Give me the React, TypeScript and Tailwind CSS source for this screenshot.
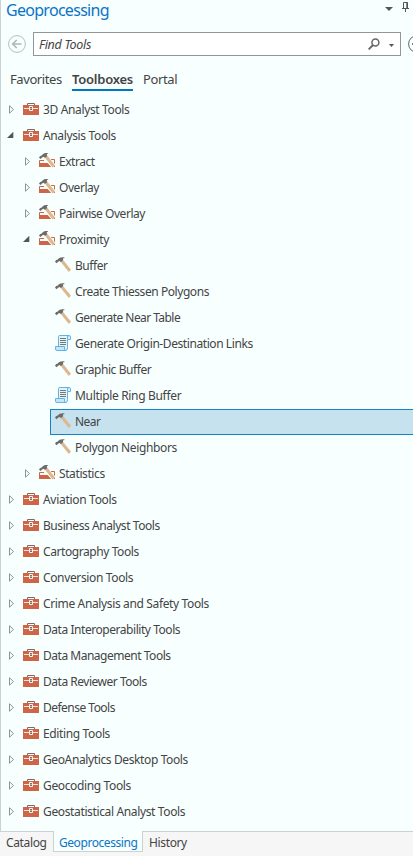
type Kind = 'box' | 'set' | 'tool' | 'script';
type Item = { label: string; kind: Kind; level: 0 | 1 | 2; open?: boolean; selected?: boolean; tracking?: string };

const items: Item[] = [
  { label: '3D Analyst Tools', kind: 'box', level: 0 },
  { label: 'Analysis Tools', kind: 'box', level: 0, open: true },
  { label: 'Extract', kind: 'set', level: 1, tracking: 'tracking-[-0.45px]' },
  { label: 'Overlay', kind: 'set', level: 1, tracking: 'tracking-[-0.45px]' },
  { label: 'Pairwise Overlay', kind: 'set', level: 1, tracking: 'tracking-[-0.46px]' },
  { label: 'Proximity', kind: 'set', level: 1, open: true },
  { label: 'Buffer', kind: 'tool', level: 2, tracking: 'tracking-[-0.45px]' },
  { label: 'Create Thiessen Polygons', kind: 'tool', level: 2, tracking: 'tracking-[-0.43px]' },
  { label: 'Generate Near Table', kind: 'tool', level: 2, tracking: 'tracking-[-0.56px]' },
  { label: 'Generate Origin-Destination Links', kind: 'script', level: 2, tracking: 'tracking-[-0.42px]' },
  { label: 'Graphic Buffer', kind: 'tool', level: 2, tracking: 'tracking-[-0.41px]' },
  { label: 'Multiple Ring Buffer', kind: 'script', level: 2, tracking: 'tracking-[-0.33px]' },
  { label: 'Near', kind: 'tool', level: 2, selected: true, tracking: 'tracking-[-0.55px]' },
  { label: 'Polygon Neighbors', kind: 'tool', level: 2 },
  { label: 'Statistics', kind: 'set', level: 1, tracking: 'tracking-[-0.4px]' },
  { label: 'Aviation Tools', kind: 'box', level: 0, tracking: 'tracking-[-0.3px]' },
  { label: 'Business Analyst Tools', kind: 'box', level: 0, tracking: 'tracking-[-0.43px]' },
  { label: 'Cartography Tools', kind: 'box', level: 0, tracking: 'tracking-[-0.42px]' },
  { label: 'Conversion Tools', kind: 'box', level: 0 },
  { label: 'Crime Analysis and Safety Tools', kind: 'box', level: 0 },
  { label: 'Data Interoperability Tools', kind: 'box', level: 0, tracking: 'tracking-[-0.45px]' },
  { label: 'Data Management Tools', kind: 'box', level: 0, tracking: 'tracking-[-0.48px]' },
  { label: 'Data Reviewer Tools', kind: 'box', level: 0, tracking: 'tracking-[-0.48px]' },
  { label: 'Defense Tools', kind: 'box', level: 0, tracking: 'tracking-[-0.52px]' },
  { label: 'Editing Tools', kind: 'box', level: 0 },
  { label: 'GeoAnalytics Desktop Tools', kind: 'box', level: 0, tracking: 'tracking-[-0.38px]' },
  { label: 'Geocoding Tools', kind: 'box', level: 0 },
  { label: 'Geostatistical Analyst Tools', kind: 'box', level: 0 },
];

function ItemIcon({ kind }: { kind: Kind }) {
  return (
    <svg className="mb-[2px] size-4 shrink-0" viewBox="0 0 16 16">
      {kind === 'box' && (
        <>
          <path d="M4.5 4V2.5h7V4" fill="none" stroke="#84685f" />
          <path d="M0 4h16v10H0Z" fill="#cd6546" />
          <path d="M1 7.5h5M10 7.5h5" stroke="#f7e5dd" />
          <path d="M6.5 5.5h3v4h-3Z" fill="#8b665c" stroke="#f7f2ef" />
          <path d="M7.5 7h1v1h-1Z" fill="#f7f2ef" />
        </>
      )}
      {kind === 'set' && (
        <>
          <path d="M0 10h16v4H0Z" fill="#cd6546" />
          <path d="M.5 10V7.5H5M11 6.5h4.5V10" fill="none" stroke="#cd6546" />
          <path d="M4.5 5.2 8.2 2 16.5 11.5 13.5 15.5Z" fill="#f7ffff" />
          <path d="M6.1 4.7 8.4 2.8 16 12.6 13.7 14.5Z" fill="#dfb78c" />
          <path d="M0 4.8 1.1 3 2.4 2.8C4 .7 5.7-.4 9 0L9.2 .6C7.6.8 7.5 1.8 8.3 3L6 5 4.7 3.8 3 4.4 1.7 6Z" fill="#6c6c6c" />
        </>
      )}
      {kind === 'tool' && (
        <>
          <path d="M6 5.2 8.3 3.3 16 12.8 13.8 15Z" fill="#dfb78c" />
          <path d="M0 4.8 1.1 3 2.4 2.8C4 .7 6 0 9.5.4V1C8.1 1.1 7.5 1.8 8.3 3L6 5.2 4.7 4.1 3 4.7 1.7 6.2Z" fill="#6c6c6c" />
        </>
      )}
      {kind === 'script' && (
        <>
          <path d="M3.5 11.5v-10Q3.5.5 5 .5h9q1.5 0 1.5 1.5v2.5h-3v8.3q0 2.7-2 2.7" fill="#e3f3fb" stroke="#62b4e2" />
          <path d="M12.5 4.5V2q0-1.5 1.5-1.5M.5 11.5h9V14q.2 1.5 1.5 1.5H2Q.5 15.5.5 14Z" fill="#c6e6f6" stroke="#62b4e2" />
          <path d="M5 3.5h6M5 5.5h6M5 7.5h6M5 9.5h6" stroke="#777" />
        </>
      )}
    </svg>
  );
}

function Arrow({ open }: { open?: boolean }) {
  return (
    <svg className="mb-px size-[9px] shrink-0" viewBox="0 0 9 9">
      {open ? <path d="M0 7 6.3.7V7Z" fill="#555" /> : <path d="M2.5.8v7.4L6.5 4.5Z" fill="none" stroke="#929292" />}
    </svg>
  );
}

function Row({ item }: { item: Item }) {
  const indent = item.level === 0 ? 'ml-[5px]' : item.level === 1 ? 'ml-[21px]' : 'ml-[49px]';
  const box = item.selected ? 'border-[#1683c5] bg-[#c6e2ee]' : 'border-transparent';
  return (
    <li className={`flex h-[26px] items-center whitespace-nowrap border border-r-0 ${indent} ${box}`}>
      {item.level < 2 && <span className="mr-[7px] flex"><Arrow open={item.open} /></span>}
      <span className={item.level === 2 ? 'ml-[4px] flex' : 'flex'}><ItemIcon kind={item.kind} /></span>
      <span className={`ml-[4px] leading-4 ${item.tracking ?? ''}`}>{item.label}</span>
    </li>
  );
}

export default function App() {
  return (
    <div className="flex h-[856px] w-[413px] flex-col overflow-hidden bg-[#f6f6f6] font-['Noto_Sans','Open_Sans',sans-serif] text-[12px] tracking-[-0.36px] text-[#444]">
      <main className="flex h-[832px] shrink-0 flex-col border-b border-l border-[#ccd1d2] bg-[#f7ffff]">
        <header className="flex h-[32px] items-start justify-between pl-[5px]">
          <h1 className="text-[16px] leading-[20px] tracking-[-0.71px] text-[#0c74c6]">Geoprocessing</h1>
          <div className="flex">
            <svg className="mt-[7px] mr-[8px] h-[4px] w-[8px]" viewBox="0 0 8 4"><path d="M0 0h8L4 4Z" fill="#555" /></svg>
            <svg className="mr-[3px] h-[12px] w-[9px]" viewBox="0 0 9 12"><path d="M2.5 8V2.5h4V8M1 8.5h7M4.5 9v3M5.8 2v6" fill="none" stroke="#555" /></svg>
          </div>
        </header>
        <div className="flex h-6 shrink-0 items-center">
          <svg className="ml-[7px] size-[18px] shrink-0" viewBox="0 0 18 18"><circle cx="9" cy="9" r="8.4" fill="none" stroke="#b9bcbc" /><path d="M13.5 9H5M8.7 5 4.7 9l4 4" fill="none" stroke="#b4b7b7" strokeWidth="1.7" /></svg>
          <div className="ml-[7px] flex h-6 w-[368px] shrink-0 items-center border border-[#919696] bg-white pl-[5px]">
            <span className="mt-[2px] text-[12.5px] italic tracking-[-0.3px]">Find Tools</span>
            <svg className="ml-auto size-3" viewBox="0 0 12 12"><circle cx="7.4" cy="4.5" r="3.5" fill="none" stroke="#666" strokeWidth="1.5" /><path d="M5 7 .6 11.4" stroke="#666" strokeWidth="1.9" /></svg>
            <svg className="mt-[2px] mr-[6px] ml-[9px] h-[3px] w-[5px]" viewBox="0 0 5 3"><path d="M0 0h5L2.5 3Z" fill="#555" /></svg>
          </div>
          <svg className="ml-[7px] size-[18px] shrink-0" viewBox="0 0 18 18"><circle cx="9" cy="9" r="8.4" fill="none" stroke="#666" /><path d="M4 9h10M9 4v10" stroke="#555" strokeWidth="1.5" /></svg>
        </div>
        <nav className="flex h-[41px] shrink-0 items-start pt-[14px] pl-[9px] text-[13px] leading-[18px]">
          <span className="w-[62px] tracking-[-0.42px]">Favorites</span>
          <span className="h-[21px] w-[61px] border-b-2 border-[#0078be] font-semibold tracking-[-0.24px]">Toolboxes</span>
          <span className="ml-[10px]">Portal</span>
        </nav>
        <ul className="text-[12px]">{items.map((item) => <Row key={item.label} item={item} />)}</ul>
      </main>
      <footer className="flex h-6 items-start text-[12px] leading-[20px]">
        <span className="w-[53px] pl-[6px] pt-px">Catalog</span>
        <span className="-mt-px h-[21px] w-[90px] border border-t-0 border-[#ccd1d2] bg-[#f7ffff] pl-[5px] leading-[23px] tracking-[-0.44px] text-[#0c74c6]">Geoprocessing</span>
        <span className="pl-[6px] pt-px">History</span>
      </footer>
    </div>
  );
}
